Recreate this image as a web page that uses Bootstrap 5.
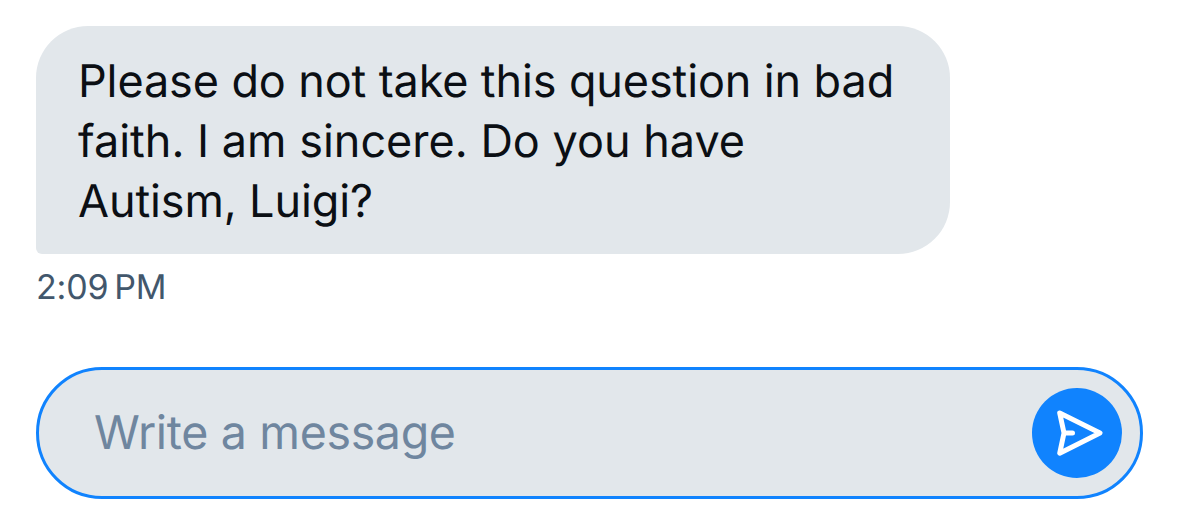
<!DOCTYPE html>
<html lang="en">
<head>
  <meta charset="UTF-8" />
  <meta name="viewport" content="width=device-width, initial-scale=1.0"/>
  <title>Messages</title>
  <link href="https://cdn.jsdelivr.net/npm/bootstrap@5.3.0/dist/css/bootstrap.min.css" rel="stylesheet" />
  <style>
    body {
      font-family: Inter, "Liberation Sans", sans-serif;
      color: #0b0f14;
      text-rendering: geometricPrecision;
    }

    .chat {
      height: 523px;
      padding: 26px 36px 24px;
    }

    .bubble {
      width: 914px;
      height: 228px;
      padding: 25px 42px;
      background-color: #e2e7eb;
      border-radius: 52px 52px 52px 6px;
      font-size: 45px;
      line-height: 60px;
      white-space: nowrap;
    }

    .bubble-tight {
      letter-spacing: -0.12px;
    }

    .sent-at {
      margin-top: 11px;
      font-size: 34px;
      line-height: 46px;
      letter-spacing: -0.2px;
      color: #42576c;
    }

    .composer {
      height: 132px;
      padding: 0 18px 0 55px;
      background-color: #e2e7eb;
      border: 3px solid #1083fe;
    }

    .composer .form-control, .composer .form-control:focus {
      height: 90px;
      font-size: 46.5px;
      letter-spacing: -0.33px;
      text-rendering: geometricPrecision;
      box-shadow: none;
    }

    .composer .form-control::placeholder {
      color: #6f869f;
      opacity: 1;
    }

    .btn-send {
      width: 90px;
      height: 90px;
      background-color: #1083fe;
    }
  </style>
</head>
<body>
  <main class="chat d-flex flex-column">
    <!-- Incoming message -->
    <div class="bubble"><span class="bubble-tight">Please do not take this question in bad</span><br />faith. I am sincere. Do you have<br /><span class="bubble-tight">Autism, Luigi?</span></div>
    <div class="sent-at">2:09&#8239;PM</div>

    <!-- Composer -->
    <form class="composer rounded-pill d-flex align-items-center mt-auto" onsubmit="return false">
      <input type="text" class="form-control border-0 bg-transparent p-0" placeholder="Write a message" aria-label="Write a message" />
      <button type="submit" class="btn btn-send rounded-circle border-0 p-0 flex-shrink-0 d-flex align-items-center justify-content-center" aria-label="Send">
        <svg width="90" height="90" viewBox="0 0 90 90" fill="none" stroke="#fff" stroke-width="5" stroke-linejoin="round" stroke-linecap="round">
          <path d="M27.7 25 L68 45 L27.7 65.2 L32 45 Z M32 45 H40.5" />
        </svg>
      </button>
    </form>
  </main>

  <script src="https://cdn.jsdelivr.net/npm/bootstrap@5.3.0/dist/js/bootstrap.bundle.min.js"></script>
</body>
</html>
